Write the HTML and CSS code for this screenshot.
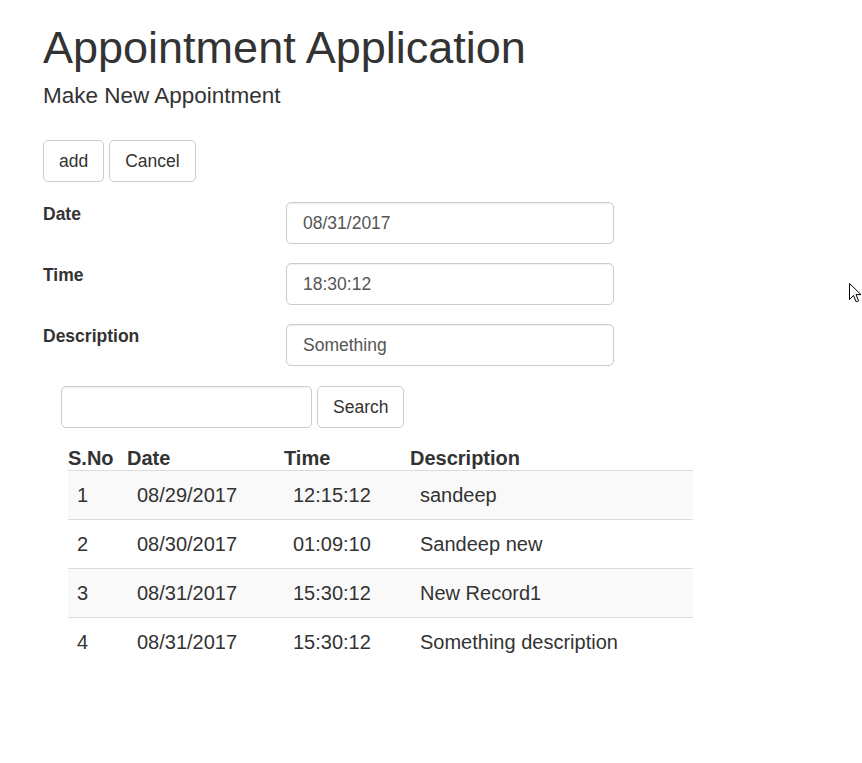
FILE: index.html
```html
<!DOCTYPE html>
<html>
<head>
<meta charset="utf-8">
<title>Appointment Application</title>
<link rel="stylesheet" href="styles.css">
</head>
<body>
<div class="page">
  <h1 class="title">Appointment Application</h1>
  <h4 class="subtitle">Make New Appointment</h4>

  <div class="actions">
    <button class="btn">add</button>
    <button class="btn">Cancel</button>
  </div>

  <div class="form">
    <div class="form-row">
      <label class="label">Date</label>
      <input class="input" type="text" value="08/31/2017">
    </div>
    <div class="form-row">
      <label class="label">Time</label>
      <input class="input" type="text" value="18:30:12">
    </div>
    <div class="form-row">
      <label class="label">Description</label>
      <input class="input" type="text" value="Something">
    </div>
  </div>

  <div class="search">
    <input class="input search-input" type="text" value="">
    <button class="btn">Search</button>
  </div>

  <table class="table">
    <colgroup>
      <col class="c1"><col class="c2"><col class="c3"><col class="c4">
    </colgroup>
    <thead>
      <tr><th>S.No</th><th>Date</th><th>Time</th><th>Description</th></tr>
    </thead>
    <tbody>
      <tr class="odd"><td>1</td><td>08/29/2017</td><td>12:15:12</td><td>sandeep</td></tr>
      <tr><td>2</td><td>08/30/2017</td><td>01:09:10</td><td>Sandeep new</td></tr>
      <tr class="odd"><td>3</td><td>08/31/2017</td><td>15:30:12</td><td>New Record1</td></tr>
      <tr><td>4</td><td>08/31/2017</td><td>15:30:12</td><td>Something description</td></tr>
    </tbody>
  </table>
</div>

<svg class="cursor" width="13" height="21" viewBox="0 0 13 21" xmlns="http://www.w3.org/2000/svg">
  <path d="M0.5 0.5 L0.5 16.5 L4.5 12.5 L7.2 18.8 L9.6 17.8 L7 11.6 L12 11.6 Z" fill="#fff" stroke="#000" stroke-width="1" stroke-linejoin="miter"/>
</svg>
</body>
</html>
```

FILE: styles.css
```css
html, body {
  margin: 0;
  padding: 0;
  background: #fff;
}

body {
  font-family: "Liberation Sans", Arial, sans-serif;
  color: #333;
}

.page {
  padding: 23px 0 40px 43px;
}

.title {
  margin: 0;
  font-size: 45px;
  font-weight: 400;
  line-height: 49px;
}

.subtitle {
  margin: 12px 0 0 0;
  font-size: 22.5px;
  font-weight: 400;
  line-height: 24px;
}

.actions {
  display: flex;
  gap: 5px;
  margin-top: 32px;
}

.btn {
  height: 42px;
  padding: 0 15px;
  border: 1px solid #ccc;
  border-radius: 5px;
  background: #fff;
  color: #333;
  font-family: "Liberation Sans", Arial, sans-serif;
  font-size: 17.5px;
  line-height: 20px;
}

.form {
  display: flex;
  flex-direction: column;
  gap: 19px;
  margin-top: 20px;
}

.form-row {
  display: flex;
  align-items: flex-start;
}

.label {
  width: 243px;
  padding-top: 2px;
  font-size: 17.5px;
  font-weight: 700;
  line-height: 20px;
}

.input {
  box-sizing: border-box;
  width: 328px;
  height: 42px;
  padding: 0 16px;
  border: 1px solid #ccc;
  border-radius: 5px;
  background: #fff;
  color: #555;
  font-family: "Liberation Sans", Arial, sans-serif;
  font-size: 17.5px;
  box-shadow: inset 0 1px 1px rgba(0,0,0,0.06);
  outline: none;
}

.search {
  display: flex;
  gap: 5px;
  margin: 20px 0 0 18px;
}

.search-input {
  width: 251px;
}

.table {
  margin: 19px 0 0 25px;
  width: 625px;
  border-collapse: collapse;
  table-layout: fixed;
  font-size: 20px;
}

.c1 { width: 59px; }
.c2 { width: 157px; }
.c3 { width: 126px; }
.c4 { width: 283px; }

.table th {
  padding: 0;
  height: 23px;
  line-height: 23px;
  text-align: left;
  font-weight: 700;
  border-bottom: 1px solid #ddd;
}

.table td {
  padding: 13px 0 13px 9px;
  line-height: 22px;
  border-top: 1px solid #ddd;
}

.table td:nth-child(2),
.table td:nth-child(4) {
  padding-left: 10px;
}

.table tr.odd td {
  background: #f9f9f9;
}

.cursor {
  position: absolute;
  left: 849px;
  top: 283px;
}
```
